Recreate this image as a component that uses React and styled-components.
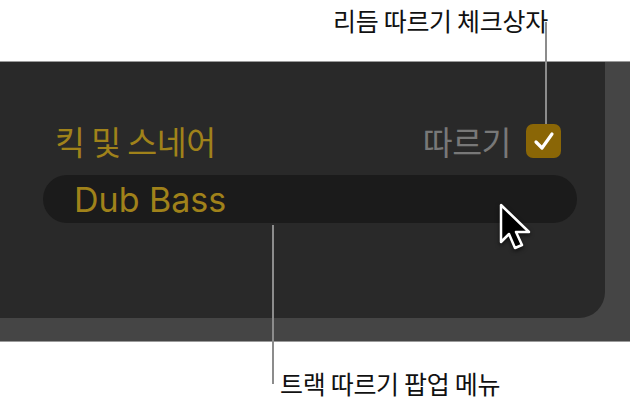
import React from "react";
import styled, { createGlobalStyle } from "styled-components";

const GlobalStyle = createGlobalStyle`
  html, body {
    margin: 0;
    padding: 0;
    background: #ffffff;
  }
  body {
    font-family: "Noto Sans CJK KR", "Noto Sans", sans-serif;
  }
`;

const Page = styled.div`
  position: relative;
  width: 630px;
  height: 410px;
  overflow: hidden;
  background: #ffffff;
`;

const TopCaption = styled.div`
  height: 61px;
  display: flex;
  justify-content: flex-start;
  padding-left: 333px;
  box-sizing: border-box;
`;

const Caption = styled.span`
  font-family: "Noto Sans CJK KR", sans-serif;
  font-size: 25px;
  line-height: 1;
  color: #111111;
  letter-spacing: -0.3px;
  white-space: nowrap;
  margin-top: ${(p) => p.$top}px;
`;

const Frame = styled.div`
  background: #454545;
  border-top: 1px solid #9a9a9a;
  border-bottom: 1px solid #9a9a9a;
  padding: 0 25px 23px 0;
`;

const Inner = styled.div`
  height: 256px;
  background: #292929;
  border-bottom-right-radius: 26px;
  padding: 62px 0 0 43px;
  box-sizing: border-box;
  display: flex;
  flex-direction: column;
  gap: 17px;
`;

const HeaderRow = styled.div`
  height: 34px;
  width: 518px;
  display: flex;
  align-items: center;
  justify-content: space-between;
`;

const Title = styled.span`
  font-size: 32.5px;
  line-height: 1;
  color: #a0821a;
  margin-left: 12px;
  letter-spacing: -0.5px;
`;

const FollowGroup = styled.label`
  display: flex;
  align-items: center;
  gap: 15px;
`;

const FollowText = styled.span`
  font-size: 32.5px;
  line-height: 1;
  color: #787878;
  letter-spacing: -0.5px;
`;

const Check = styled.span`
  width: 35px;
  height: 34px;
  border-radius: 7px;
  background: #8a6606;
  display: flex;
  align-items: center;
  justify-content: center;
`;

const Popup = styled.div`
  width: 534px;
  height: 48px;
  border-radius: 24px;
  background: #1b1b1b;
  display: flex;
  align-items: center;
  padding-left: 31px;
  box-sizing: border-box;
`;

const PopupText = styled.span`
  font-family: Inter, "Noto Sans", sans-serif;
  font-size: 34px;
  line-height: 1;
  color: #a0821a;
  margin-top: 2px;
`;

const BottomCaption = styled.div`
  display: flex;
  padding-left: 280px;
`;

const Leader = styled.div`
  position: absolute;
  left: ${(p) => p.$x}px;
  top: ${(p) => p.$y1}px;
  height: ${(p) => p.$y2 - p.$y1}px;
  width: 2px;
  background: #8c8c8c;
`;

const Pointer = styled.svg`
  position: absolute;
  left: 498px;
  top: 202px;
  filter: drop-shadow(0 2px 2px rgba(0, 0, 0, 0.6));
`;

const App = () => {
  return (
    <Page>
      <GlobalStyle />
      <TopCaption>
        <Caption $top={8}>리듬 따르기 체크상자</Caption>
      </TopCaption>
      <Frame>
        <Inner>
          <HeaderRow>
            <Title>킥 및 스네어</Title>
            <FollowGroup>
              <FollowText>따르기</FollowText>
              <Check>
                <svg width="22" height="20" viewBox="0 0 22 20">
                  <path
                    d="M3 11 L9 17 L19 3"
                    fill="none"
                    stroke="#ffffff"
                    strokeWidth="3.2"
                    strokeLinecap="round"
                    strokeLinejoin="round"
                  />
                </svg>
              </Check>
            </FollowGroup>
          </HeaderRow>
          <Popup>
            <PopupText>Dub Bass</PopupText>
          </Popup>
        </Inner>
      </Frame>
      <BottomCaption>
        <Caption $top={29}>트랙 따르기 팝업 메뉴</Caption>
      </BottomCaption>
      <Leader $x={545} $y1={22} $y2={124} />
      <Leader $x={272} $y1={225} $y2={384} />
      <Pointer width="38" height="52" viewBox="0 0 38 52">
        <path
          d="M3 3 L3 40 L11 32 L17 46 L24 43 L18 30 L31 30 Z"
          fill="#000000"
          stroke="#ffffff"
          strokeWidth="2.5"
          strokeLinejoin="round"
        />
      </Pointer>
    </Page>
  );
};

export default App;
